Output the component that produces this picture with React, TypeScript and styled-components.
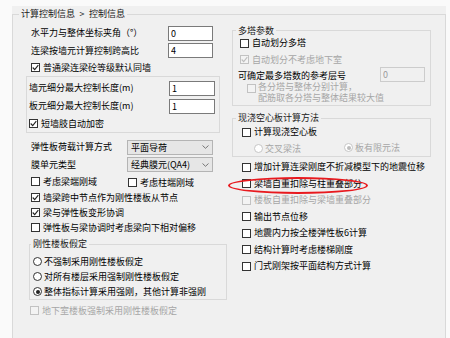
import React from 'react'
import styled, { createGlobalStyle } from 'styled-components'

const GlobalStyle = createGlobalStyle`
  html, body {
    margin: 0;
    padding: 0;
  }
  body {
    background: #fafafa;
    font-family: 'Noto Sans CJK SC', 'Noto Sans', sans-serif;
    font-size: 9px;
    color: #000;
  }
`

const Window = styled.div`
  box-sizing: border-box;
  width: 450px;
  height: 338px;
  overflow: hidden;
  padding: 6px 4px 0 12px;
  background: #fafafa;
`

const Page = styled.div`
  box-sizing: border-box;
  height: 100%;
  padding-top: 2px;
  background: #f0f0f0;
`

const Group = styled.fieldset<{ $h?: number; $pad?: string; $mt?: number; $ml?: number }>`
  box-sizing: border-box;
  min-width: 0;
  margin: ${p => p.$mt ?? 0}px 0 0 ${p => p.$ml ?? 0}px;
  padding: ${p => p.$pad ?? '0'};
  border: 1px solid #d9d9d9;
  ${p => (p.$h ? `height: ${p.$h}px;` : '')}
`

const Legend = styled.legend<{ $x?: number; $lh?: number }>`
  margin-left: ${p => p.$x ?? 3}px;
  padding: 0 2px;
  line-height: ${p => p.$lh ?? 12}px;
  color: #1a1a1a;
  white-space: nowrap;
`

const Columns = styled.div`
  display: grid;
  grid-template-columns: 201px 199px;
  column-gap: 5px;
  padding: 4px 13px 0 13px;
`

const Column = styled.div`
  display: flex;
  flex-direction: column;
`

const Row = styled.div<{ $h: number; $pl?: number; $pr?: number; $mt?: number; $align?: string }>`
  position: relative;
  box-sizing: border-box;
  display: flex;
  align-items: ${p => p.$align ?? 'center'};
  height: ${p => p.$h}px;
  margin-top: ${p => p.$mt ?? 0}px;
  padding-left: ${p => p.$pl ?? 0}px;
  padding-right: ${p => p.$pr ?? 0}px;
`

const FieldRow = styled(Row)`
  justify-content: space-between;
`

const Cell = styled.div<{ $w: number }>`
  width: ${p => p.$w}px;
  flex: none;
`

const Panel = styled.div`
  box-sizing: border-box;
  width: 194px;
  height: 57px;
  padding-top: 2px;
  border: 1px solid #d9d9d9;
`

const Text = styled.span<{ $disabled?: boolean }>`
  color: ${p => (p.$disabled ? '#a6a6a6' : '#000')};
  line-height: 12px;
  white-space: nowrap;
`

const TextBox = styled.input<{ $w: number }>`
  box-sizing: border-box;
  width: ${p => p.$w}px;
  height: 15px;
  margin: 0;
  padding: 0 0 0 2px;
  border: 1px solid #7a7a7a;
  background: #fff;
  font: inherit;
  font-size: 9px;
  color: #000;
  outline: none;
  &:disabled {
    border-color: #cccccc;
    background: #f0f0f0;
    color: #9a9a9a;
  }
`

const Select = styled.div<{ $w: number }>`
  box-sizing: border-box;
  display: flex;
  align-items: center;
  justify-content: space-between;
  width: ${p => p.$w}px;
  height: 15px;
  padding: 0 3px 0 3px;
  border: 1px solid #b4b4b4;
  background: #e6e6e6;
  color: #000;
  white-space: nowrap;
`

const Item = styled.label<{ $gap?: number }>`
  display: inline-flex;
  align-items: center;
  gap: ${p => p.$gap ?? 3}px;
`

const Box = styled.span<{ $disabled?: boolean }>`
  box-sizing: border-box;
  display: inline-flex;
  align-items: center;
  justify-content: center;
  flex: none;
  width: 9px;
  height: 9px;
  border: 1px solid ${p => (p.$disabled ? '#c2c2c2' : '#333')};
  background: ${p => (p.$disabled ? '#f3f3f3' : '#fff')};
  color: ${p => (p.$disabled ? '#bdbdbd' : '#222')};
`

const Circle = styled.span<{ $disabled?: boolean; $on?: boolean }>`
  box-sizing: border-box;
  display: inline-flex;
  align-items: center;
  justify-content: center;
  flex: none;
  width: 9px;
  height: 9px;
  border-radius: 50%;
  border: 1px solid ${p => (p.$disabled ? '#c6c6c6' : '#333')};
  background: #fff;
  &::after {
    content: '';
    width: 4px;
    height: 4px;
    border-radius: 50%;
    background: ${p => (p.$on ? (p.$disabled ? '#bcbcbc' : '#222') : 'transparent')};
  }
`

const TwoLine = styled.div`
  box-sizing: border-box;
  display: flex;
  align-items: flex-start;
  gap: 2px;
  height: 22px;
  padding: 0 0 0 14px;
  color: #a6a6a6;
  white-space: nowrap;
  & > span:first-child {
    margin-top: 2px;
  }
`

const Lines = styled.span`
  display: flex;
  flex-direction: column;
  line-height: 10.5px;
`

const Mark = styled.span`
  position: absolute;
  left: -4px;
  top: 1px;
  box-sizing: border-box;
  width: 140px;
  height: 17px;
  border: 2px solid #e8191e;
  border-radius: 50%;
  pointer-events: none;
`

const CheckMark = () => (
  <svg width="7" height="7" viewBox="0 0 7 7">
    <polyline points="0.7,3.5 2.7,5.6 6.3,1.2" fill="none" stroke="currentColor" strokeWidth="1.1" />
  </svg>
)

const Chevron = () => (
  <svg width="7" height="4" viewBox="0 0 7 4">
    <polyline points="0.5,0.5 3.5,3.3 6.5,0.5" fill="none" stroke="#6a6a6a" strokeWidth="0.9" />
  </svg>
)

type OptProps = { checked?: boolean; disabled?: boolean; children: React.ReactNode }

const Option = ({ checked, disabled, children }: OptProps) => (
  <Item>
    <Box $disabled={disabled}>{checked && <CheckMark />}</Box>
    <Text $disabled={disabled}>{children}</Text>
  </Item>
)

const Radio = ({ checked, disabled, children }: OptProps) => (
  <Item $gap={2}>
    <Circle $on={checked} $disabled={disabled} />
    <Text $disabled={disabled}>{children}</Text>
  </Item>
)

const rightChecks: { text: string; disabled?: boolean; marked?: boolean }[] = [
  { text: '增加计算连梁刚度不折减模型下的地震位移' },
  { text: '梁墙自重扣除与柱重叠部分', marked: true },
  { text: '楼板自重扣除与梁墙重叠部分', disabled: true },
  { text: '输出节点位移' },
  { text: '地震内力按全楼弹性板6计算' },
  { text: '结构计算时考虑楼梯刚度' },
  { text: '门式刚架按平面结构方式计算' },
]

export default function App() {
  return (
    <Window>
      <GlobalStyle />
      <Page>
        <Group $h={340}>
          <Legend $x={6}>{'计算控制信息\u2002>\u2002控制信息'}</Legend>
          <Columns>
            <Column>
              <FieldRow $h={18} $pl={5} $pr={14}>
                <Text>水平力与整体坐标夹角（°）</Text>
                <TextBox $w={45} defaultValue="0" readOnly />
              </FieldRow>
              <FieldRow $h={17} $pl={5} $pr={14}>
                <Text>连梁按墙元计算控制跨高比</Text>
                <TextBox $w={45} defaultValue="4" readOnly />
              </FieldRow>
              <Row $h={17} $pl={5}>
                <Option checked>普通梁连梁砼等级默认同墙</Option>
              </Row>
              <Panel>
                <FieldRow $h={18} $pl={2} $pr={4}>
                  <Text>墙元细分最大控制长度(m)</Text>
                  <TextBox $w={46} defaultValue="1" readOnly />
                </FieldRow>
                <FieldRow $h={18} $pl={2} $pr={4}>
                  <Text>板元细分最大控制长度(m)</Text>
                  <TextBox $w={46} defaultValue="1" readOnly />
                </FieldRow>
                <Row $h={17} $pl={2}>
                  <Option checked>短墙肢自动加密</Option>
                </Row>
              </Panel>
              <FieldRow $h={18} $pl={5} $pr={14} $mt={5}>
                <Text>弹性板荷载计算方式</Text>
                <Select $w={86}>
                  平面导荷
                  <Chevron />
                </Select>
              </FieldRow>
              <FieldRow $h={17} $pl={5} $pr={14}>
                <Text>膜单元类型</Text>
                <Select $w={86}>
                  经典膜元(QA4)
                  <Chevron />
                </Select>
              </FieldRow>
              <Row $h={15} $pl={5} $mt={2}>
                <Cell $w={97}>
                  <Option>考虑梁端刚域</Option>
                </Cell>
                <Option>考虑柱端刚域</Option>
              </Row>
              <Row $h={15} $pl={5}>
                <Option checked>墙梁跨中节点作为刚性楼板从节点</Option>
              </Row>
              <Row $h={15} $pl={5}>
                <Option checked>梁与弹性板变形协调</Option>
              </Row>
              <Row $h={15} $pl={5}>
                <Option>弹性板与梁协调时考虑梁向下相对偏移</Option>
              </Row>
              <Group $mt={3} $ml={3} $pad="4px 0 0 0">
                <Legend $x={1}>刚性楼板假定</Legend>
                <Row $h={15} $pl={3}>
                  <Radio>不强制采用刚性楼板假定</Radio>
                </Row>
                <Row $h={15} $pl={3}>
                  <Radio>对所有楼层采用强制刚性楼板假定</Radio>
                </Row>
                <Row $h={15} $pl={3}>
                  <Radio checked>整体指标计算采用强刚，其他计算非强刚</Radio>
                </Row>
              </Group>
              <Row $h={15} $pl={4} $mt={3}>
                <Option disabled>地下室楼板强制采用刚性楼板假定</Option>
              </Row>
            </Column>

            <Column>
              <Group $mt={1} $pad="0 0 1px 0">
                <Legend $x={3} $lh={11}>多塔参数</Legend>
                <Row $h={14} $pl={7}>
                  <Option>自动划分多塔</Option>
                </Row>
                <Row $h={19} $pl={7}>
                  <Option checked disabled>自动划分不考虑地下室</Option>
                </Row>
                <FieldRow $h={16} $pl={5} $pr={5} $mt={-3} $align="flex-end">
                  <Text>可确定最多塔数的参考层号</Text>
                  <TextBox $w={45} defaultValue="0" disabled />
                </FieldRow>
                <TwoLine>
                  <Box $disabled />
                  <Lines>
                    <span>各分塔与整体分别计算，</span>
                    <span>配筋取各分塔与整体结果较大值</span>
                  </Lines>
                </TwoLine>
              </Group>
              <Group $mt={6} $pad="0 0 1px 0">
                <Legend $x={3}>现浇空心板计算方法</Legend>
                <Row $h={16} $pl={9}>
                  <Option>计算现浇空心板</Option>
                </Row>
                <Row $h={15} $pl={21}>
                  <Cell $w={90}>
                    <Radio disabled>交叉梁法</Radio>
                  </Cell>
                  <Radio checked disabled>板有限元法</Radio>
                </Row>
              </Group>
              <Column style={{ marginTop: 2 }}>
                {rightChecks.map(c => (
                  <Row key={c.text} $h={16.5} $pl={10}>
                    <Option disabled={c.disabled}>{c.text}</Option>
                    {c.marked && <Mark />}
                  </Row>
                ))}
              </Column>
            </Column>
          </Columns>
        </Group>
      </Page>
    </Window>
  )
}
